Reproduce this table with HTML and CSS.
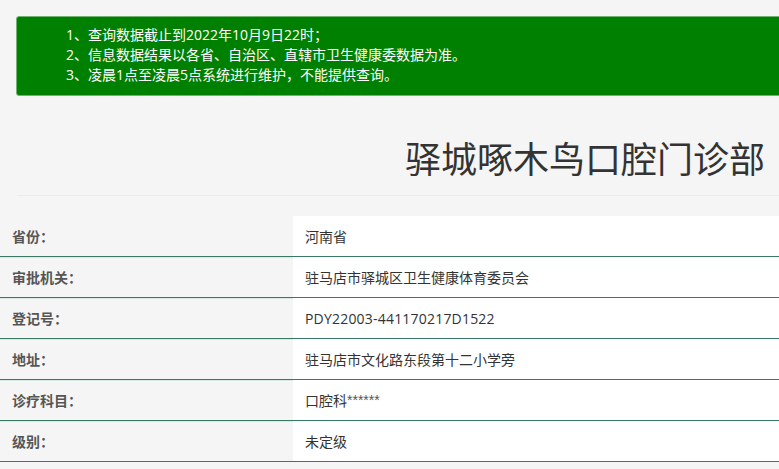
FILE: index.html
```html
<!DOCTYPE html>
<html lang="zh-CN">
<head>
<meta charset="utf-8">
<title>驿城啄木鸟口腔门诊部</title>
<link rel="stylesheet" href="styles.css">
</head>
<body>
<div class="page">
  <div class="notice">
    <p>1、查询数据截止到2022年10月9日22时；</p>
    <p>2、信息数据结果以各省、自治区、直辖市卫生健康委数据为准。</p>
    <p>3、凌晨1点至凌晨5点系统进行维护，不能提供查询。</p>
  </div>
  <h1 class="title">驿城啄木鸟口腔门诊部</h1>
  <div class="divider"></div>
  <div class="info">
    <div class="row"><div class="label">省份：</div><div class="value">河南省</div></div>
    <div class="row"><div class="label">审批机关：</div><div class="value">驻马店市驿城区卫生健康体育委员会</div></div>
    <div class="row"><div class="label">登记号：</div><div class="value latin">PDY22003-441170217D1522</div></div>
    <div class="row"><div class="label">地址：</div><div class="value">驻马店市文化路东段第十二小学旁</div></div>
    <div class="row"><div class="label">诊疗科目：</div><div class="value">口腔科<span class="mask">******</span></div></div>
    <div class="row"><div class="label">级别：</div><div class="value">未定级</div></div>
  </div>
</div>
</body>
</html>
```
FILE: styles.css
```css
html, body {
  margin: 0;
  padding: 0;
  background: #f5f5f5;
  overflow: hidden;
}
body {
  font-family: "Open Sans", "Noto Sans CJK SC", sans-serif;
  color: #333;
}
.page {
  padding-top: 16px;
}
.notice {
  margin: 0 -20px 0 16px;
  background: #008000;
  border: 1px solid #6fb36f;
  border-radius: 3px;
  padding: 8px 20px 10px 49px;
  color: #fff;
  font-size: 14px;
}
.notice p {
  margin: 0;
  line-height: 20px;
  height: 20px;
  white-space: nowrap;
}
.title {
  margin: 41px 14px 0 0;
  text-align: right;
  font-family: "Noto Sans CJK SC", sans-serif;
  font-weight: normal;
  font-size: 36px;
  line-height: 40px;
  color: #333;
}
.divider {
  margin: 18px 0 0 17px;
  height: 1px;
  background: #ebebeb;
}
.info {
  margin-top: 20px;
}
.row {
  display: flex;
  height: 40px;
  border-bottom: 1px solid #3b7a62;
  box-shadow: 0 1px 0 #d8ebe3;
}
.label {
  width: 293px;
  flex: none;
  padding-left: 12px;
  box-sizing: border-box;
  display: flex;
  align-items: center;
  font-family: "Noto Sans CJK SC", sans-serif;
  font-weight: bold;
  font-size: 14px;
  color: #555;
}
.value {
  flex: 1;
  background: #fff;
  padding-left: 12px;
  display: flex;
  align-items: center;
  font-size: 14px;
  color: #333;
}
.latin {
  letter-spacing: 0.2px;
}
.mask {
  font-family: "Liberation Sans", sans-serif;
  color: #555;
}
```
